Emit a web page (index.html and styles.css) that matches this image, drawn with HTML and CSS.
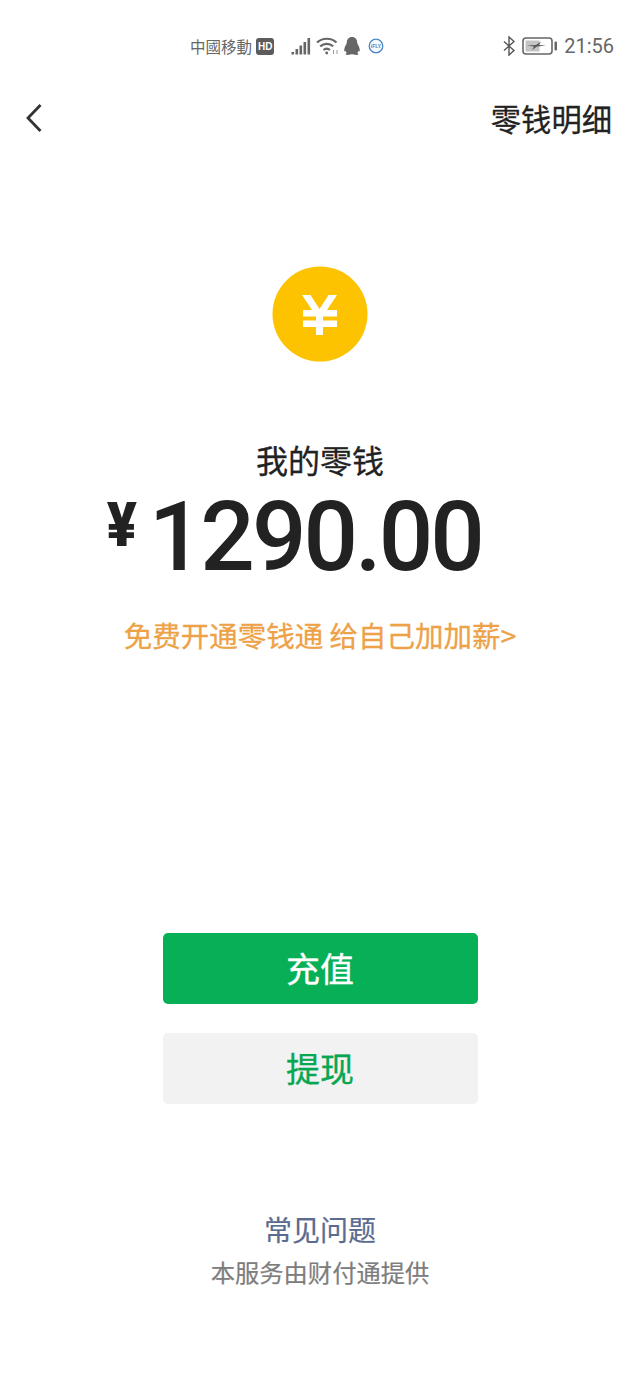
FILE: index.html
```html
<!DOCTYPE html>
<html lang="zh-CN">
<head>
  <meta charset="UTF-8" />
  <title>零钱</title>
  <link rel="stylesheet" href="styles.css">
</head>
<body>
  <div class="status-bar">
    <div class="status-left">
      <span class="carrier">中國移動</span>
      <span class="hd">HD</span>
      <svg class="ic-signal" width="20" height="18" viewBox="0 0 20 18"><rect x="0.500" y="15" width="2.600" height="2.500"/><rect x="4.500" y="12" width="2.600" height="5.500"/><rect x="8.500" y="8.500" width="2.600" height="9"/><rect x="12.500" y="5" width="2.600" height="12.500"/><rect x="16.500" y="1" width="2.600" height="16.500"/></svg>
      <svg class="ic-wifi" width="23" height="18" viewBox="0 0 23 18" fill="none" stroke="#666" stroke-width="2.200"><path d="M1 5.500c5.800-5 14-5 19.500 0"/><path d="M4.200 9.300c3.800-3.300 9.300-3.300 13 0"/><path d="M7.500 13c1.900-1.600 4.500-1.600 6.500 0"/><circle cx="10.700" cy="16" r="1.400" fill="#666" stroke="none"/><path d="M17.500 13v4M21 13v4" stroke-width="1" stroke="#999"/></svg>
      <svg class="ic-qq" width="18" height="20" viewBox="0 0 18 20"><path d="M9 1c3.400 0 5.200 2.500 5.200 5.600 0 .8.300 1.300.8 2.200.9 1.500 2 3.700 1.700 6-.1 1-.7 1-1.400.1-.2.900-.7 1.700-1.200 2.200.9.300 1.400.8 1.200 1.300-.2.400-1.700.6-3.400.4-1-.1-1.700-.4-2.300-.5h-1.200c-.6.100-1.300.4-2.300.5-1.700.2-3.200 0-3.400-.4-.2-.5.300-1 1.200-1.300-.5-.5-1-1.300-1.200-2.200-.7.900-1.300.9-1.400-.1-.3-2.300.8-4.500 1.700-6 .5-.9.800-1.400.8-2.200C3.800 3.500 5.600 1 9 1z" fill="#666"/></svg>
      <svg class="ic-badge" width="16" height="16" viewBox="0 0 16 16"><circle cx="8" cy="8" r="6.800" fill="#f7fafd" stroke="#4a86c8" stroke-width="1.300"/><text x="8" y="9.800" text-anchor="middle" class="badge-text">iFLY</text></svg>
    </div>
    <div class="status-right">
      <svg class="ic-bt" width="14" height="20" viewBox="0 0 14 20" fill="none" stroke="#555" stroke-width="1.400"><path d="M2 5.500l10 9-5 4.500V1l5 4.500-10 9"/></svg>
      <svg class="ic-battery" width="36" height="20" viewBox="0 0 36 20"><rect x="1" y="2" width="29" height="16" rx="3" fill="none" stroke="#666" stroke-width="1.600"/><rect x="3.500" y="4.500" width="14" height="11" fill="#c4c4c4"/><path d="M5 9.500l9-.5 5-3.500-2 3.500 7 .5-9 1-5 3.500 2-3.500z" fill="#555"/><rect x="32.500" y="5.500" width="2.500" height="9" rx="1" fill="#666"/></svg>
      <span class="clock">21:56</span>
    </div>
  </div>

  <div class="nav-bar">
    <svg class="back" width="18" height="30" viewBox="0 0 18 30" fill="none" stroke="#333" stroke-width="2.800"><path d="M15.500 2L3 15l12.500 13"/></svg>
    <span class="nav-link">零钱明细</span>
  </div>

  <main class="wallet">
    <div class="coin">
      <svg width="96" height="96" viewBox="0 0 96 96"><circle cx="48" cy="48" r="47.500" fill="#fdc300"/><path d="M30 29h8.500L47.500 43 56.500 29H65L55 44h10v6.500H51v4h14V61H51v8h-7v-8H31v-6.500h13v-4H31V44h9z" fill="#fff"/></svg>
    </div>
    <div class="title">我的零钱</div>
    <div class="amount"><span class="yen">¥</span><span class="num">1290.00</span></div>
    <div class="promo">免费开通零钱通 给自己加加薪&gt;</div>
    <div class="buttons">
      <div class="btn btn-primary">充值</div>
      <div class="btn btn-plain">提现</div>
    </div>
    <div class="faq">常见问题</div>
    <div class="provider">本服务由财付通提供</div>
  </main>
</body>
</html>
```

FILE: styles.css
```css
body {
  margin: 0;
  background-color: #fff;
  font-family: "Noto Sans CJK SC", "Noto Sans", sans-serif;
  color: #222;
  height: 1387px;
  overflow: hidden;
}

.status-bar {
  display: flex;
  justify-content: space-between;
  align-items: center;
  height: 46px;
  padding: 23px 26px 0 190px;
  color: #666;
}

.status-left,
.status-right {
  display: flex;
  align-items: center;
}

.carrier {
  font-size: 15.500px;
  color: #666;
}

.hd {
  background-color: #5c5c5c;
  color: #fff;
  font-family: "Liberation Sans", sans-serif;
  font-size: 10px;
  font-weight: bold;
  line-height: 13px;
  border-radius: 3px;
  padding: 2px 2px;
  margin-left: 4px;
}

.ic-signal {
  fill: #666;
  margin-left: 17px;
}

.ic-wifi {
  margin-left: 5px;
}

.ic-qq {
  margin-left: 4px;
}

.ic-badge {
  margin-left: 7px;
}

.badge-text {
  font-family: "Liberation Sans", sans-serif;
  font-size: 5px;
  font-weight: bold;
  fill: #4a86c8;
}

.ic-battery {
  margin-left: 6px;
}

.clock {
  font-family: Roboto, sans-serif;
  font-size: 20px;
  color: #666;
  margin-left: 6px;
}

.nav-bar {
  display: flex;
  justify-content: space-between;
  align-items: center;
  height: 60px;
  padding: 19px 28px 0 25px;
}

.nav-link {
  font-size: 30.300px;
  color: #222;
  -webkit-text-stroke: 0.3px;
}

.wallet {
  display: flex;
  flex-direction: column;
  align-items: center;
}

.coin {
  margin-top: 118px;
  height: 96px;
}

.title {
  font-size: 32px;
  line-height: 44px;
  margin-top: 75px;
  -webkit-text-stroke: 0.3px;
}

.amount {
  display: flex;
  align-items: flex-start;
  margin-left: -53px;
}

.yen {
  font-family: Roboto, sans-serif;
  font-weight: 900;
  font-size: 62px;
  line-height: 88px;
  margin-right: 10px;
  transform: scaleX(0.9);
}

.num {
  font-family: Roboto, sans-serif;
  font-weight: 500;
  font-size: 96px;
  line-height: 112px;
  letter-spacing: -3px;
  color: #222;
}

.promo {
  font-size: 28.500px;
  line-height: 40px;
  color: #eda248;
  margin-top: 22px;
  -webkit-text-stroke: 0.3px;
}

.buttons {
  display: flex;
  flex-direction: column;
  gap: 29px;
  margin-top: 278px;
}

.btn {
  width: 315px;
  height: 71px;
  line-height: 70px;
  border-radius: 5px;
  text-align: center;
  font-size: 34px;
  -webkit-text-stroke: 0.3px;
}

.btn-primary {
  background-color: #07b057;
  color: #fff;
}

.btn-plain {
  background-color: #f2f2f2;
  color: #07a651;
}

.faq {
  font-size: 28px;
  line-height: 40px;
  color: #5b6b8f;
  margin-top: 105px;
  -webkit-text-stroke: 0.2px;
}

.provider {
  font-size: 24.300px;
  line-height: 36px;
  color: #7d7d7d;
  margin-top: 5px;
  -webkit-text-stroke: 0.2px;
}
```
